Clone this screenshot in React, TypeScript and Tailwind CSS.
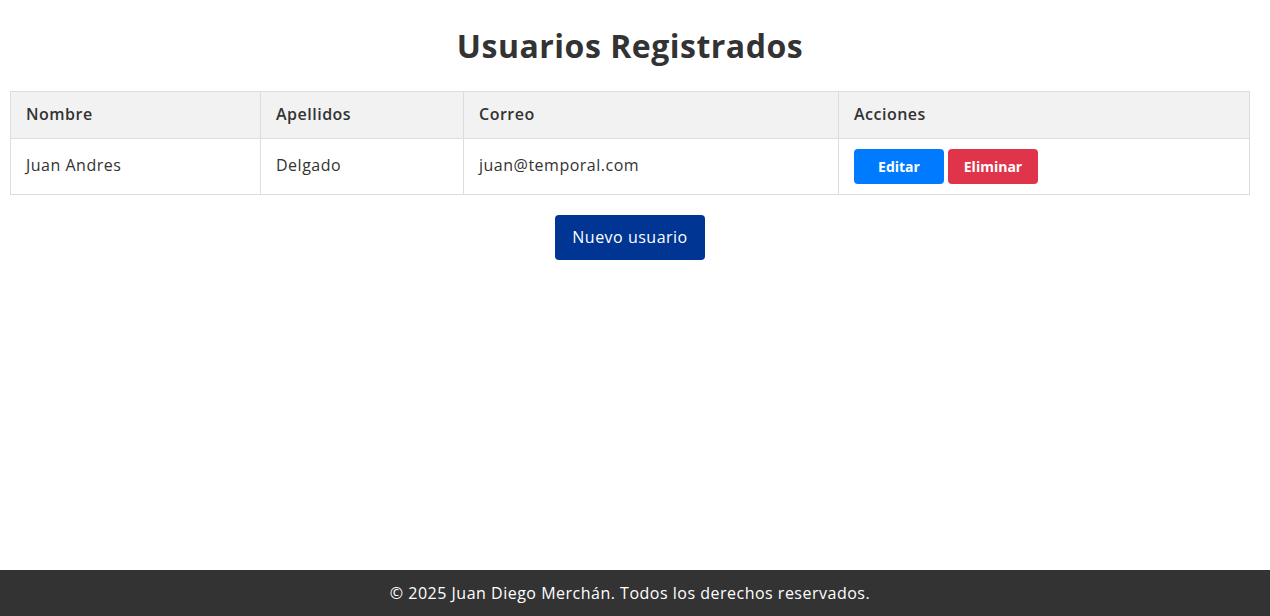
const users = [
  { nombre: 'Juan Andres', apellidos: 'Delgado', correo: 'juan@temporal.com' },
]

export default function App() {
  return (
    <div className="min-h-screen flex flex-col bg-white text-[#333] font-['Open_Sans',_'Noto_Sans',_sans-serif] tracking-[0.5px]">
      <main className="flex-1 w-[1240px] ml-[10px]">
        <h1 className="pt-[22px] mb-[21px] text-center text-[32px] leading-[48px] font-bold text-[#333]">
          Usuarios Registrados
        </h1>

        <table className="w-full table-fixed border-collapse text-[16px]">
          <colgroup>
            <col className="w-[250px]" />
            <col className="w-[203px]" />
            <col className="w-[375px]" />
            <col />
          </colgroup>
          <thead>
            <tr className="h-[47px] bg-[#f2f2f2]">
              <th className="border border-[#ddd] px-[15px] pb-[2px] text-left font-semibold">Nombre</th>
              <th className="border border-[#ddd] px-[15px] pb-[2px] text-left font-semibold">Apellidos</th>
              <th className="border border-[#ddd] px-[15px] pb-[2px] text-left font-semibold">Correo</th>
              <th className="border border-[#ddd] px-[15px] pb-[2px] text-left font-semibold">Acciones</th>
            </tr>
          </thead>
          <tbody>
            {users.map((u) => (
              <tr key={u.correo} className="h-[56px]">
                <td className="border border-[#ddd] px-[15px] pb-[3px]">{u.nombre}</td>
                <td className="border border-[#ddd] px-[15px] pb-[3px]">{u.apellidos}</td>
                <td className="border border-[#ddd] px-[15px] pb-[3px]">{u.correo}</td>
                <td className="border border-[#ddd] px-[15px]">
                  <div className="flex gap-[4px]">
                    <button className="w-[90px] h-[35px] rounded-[4px] bg-[#007bff] text-white text-[14px] font-bold tracking-normal">
                      Editar
                    </button>
                    <button className="w-[90px] h-[35px] rounded-[4px] bg-[#e0344a] text-white text-[14px] font-bold tracking-normal">
                      Eliminar
                    </button>
                  </div>
                </td>
              </tr>
            ))}
          </tbody>
        </table>

        <div className="flex justify-center mt-[20px]">
          <button className="w-[150px] h-[45px] rounded-[4px] bg-[#003594] text-white text-[16px] pb-[1px]">
            Nuevo usuario
          </button>
        </div>
      </main>

      <footer className="h-[46px] bg-[#333] text-white text-[16px] flex items-center justify-center pr-[10px]">
        © 2025 Juan Diego Merchán. Todos los derechos reservados.
      </footer>
    </div>
  )
}
